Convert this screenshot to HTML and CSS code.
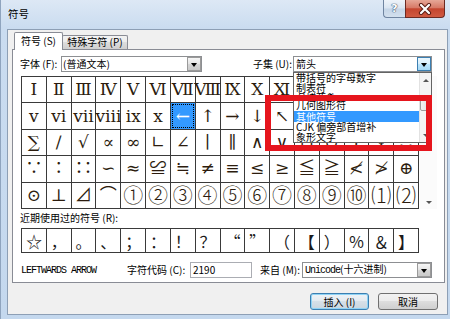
FILE: index.html
```html
<!DOCTYPE html>
<html>
<head>
<meta charset="utf-8">
<title>符号</title>
<link rel="stylesheet" href="styles.css">
</head>
<body>
<div class="window">
  <div class="titlebar">
    <span class="title">符号</span>
    <div class="caption">
      <div class="cbtn help">?</div>
      <div class="cbtn close">
        <svg width="16" height="12" viewBox="0 0 16 12"><path d="M4 2 L12 10 M12 2 L4 10" stroke="#5b1d14" stroke-width="4.2" stroke-linecap="round" fill="none"/><path d="M4 2 L12 10 M12 2 L4 10" stroke="#fff" stroke-width="2.2" stroke-linecap="round" fill="none"/></svg>
      </div>
    </div>
  </div>
  <div class="client">
    <div class="tabs">
      <div class="tab active">符号 (<u>S</u>)</div>
      <div class="tab">特殊字符 (<u>P</u>)</div>
    </div>
    <div class="panel">
      <div class="fontrow">
        <span class="lbl font-lbl">字体 (<u>F</u>):</span>
        <div class="combo font-combo"><span class="ctext">(普通文本)</span><i class="dd"></i></div>
        <span class="lbl subset-lbl">子集 (<u>U</u>):</span>
        <div class="combo subset-combo"><span class="ctext">箭头</span><i class="dd hot"></i>
          <div class="droplist">
            <div class="items">
              <div class="item">带括号的字母数字</div>
              <div class="item">制表符</div>
              <div class="item partial"><span>方块元素</span></div>
              <div class="item tall">几何图形符</div>
              <div class="item sel">其他符号</div>
              <div class="item">CJK 偏旁部首增补</div>
              <div class="item">象形文字</div>
            </div>
            <div class="lscroll">
              <span class="sarrow up"></span>
              <span class="thumb"></span>
              <span class="sarrow down"></span>
            </div>
          </div>
        </div>
      </div>
      <div class="gridwrap">
        <div class="grid main">
          <span>Ⅰ</span><span>Ⅱ</span><span>Ⅲ</span><span>Ⅳ</span><span>Ⅴ</span><span>Ⅵ</span><span>Ⅶ</span><span>Ⅷ</span><span>Ⅸ</span><span>Ⅹ</span><span>Ⅺ</span><span>Ⅻ</span><span>ⅰ</span><span>ⅱ</span><span>ⅲ</span><span>ⅳ</span>
          <span>ⅴ</span><span>ⅵ</span><span>ⅶ</span><span>ⅷ</span><span>ⅸ</span><span>ⅹ</span><span class="selected">←</span><span>↑</span><span>→</span><span>↓</span><span>↖</span><span>↗</span><span>↘</span><span>↙</span><span>∈</span><span>∏</span>
          <span>∑</span><span>∕</span><span>√</span><span>∝</span><span>∞</span><span>∟</span><span>∠</span><span>∣</span><span>∥</span><span>∧</span><span>∨</span><span>∩</span><span>∪</span><span>∫</span><span>∮</span><span>∴</span>
          <span>∵</span><span>∶</span><span>∷</span><span>∽</span><span>≈</span><span>≌</span><span>≒</span><span>≠</span><span>≡</span><span>≤</span><span>≥</span><span>≦</span><span>≧</span><span>≮</span><span>≯</span><span>⊕</span>
          <span>⊙</span><span>⊥</span><span>⊿</span><span>⌒</span><span class="big">①</span><span class="big">②</span><span class="big">③</span><span class="big">④</span><span class="big">⑤</span><span class="big">⑥</span><span class="big">⑦</span><span class="big">⑧</span><span class="big">⑨</span><span class="big">⑩</span><span class="big">⑴</span><span class="big">⑵</span>
        </div>
        <div class="vscroll"><span class="sarrow down"></span></div>
      </div>
      <div class="recent-label">近期使用过的符号 (<u>R</u>):</div>
      <div class="grid recent">
        <span>☆</span><span>，</span><span>。</span><span>、</span><span>；</span><span>：</span><span>！</span><span>？</span><span>“</span><span>”</span><span>（</span><span>【</span><span>）</span><span>％</span><span>＆</span><span>】</span>
      </div>
      <div class="inforow">
        <span class="charname">LEFTWARDS ARROW</span>
        <span class="lbl code-lbl">字符代码 (<u>C</u>):</span>
        <div class="input">2190</div>
        <span class="lbl from-lbl">来自 (<u>M</u>):</span>
        <div class="combo from-combo"><span class="ctext"><span class="mono">Unicode</span>(十六进制)</span><i class="dd"></i></div>
      </div>
    </div>
    <div class="buttons">
      <div class="btn default">插入 (<u>I</u>)</div>
      <div class="btn">取消</div>
    </div>
  </div>
  <div class="annot"></div>
</div>
</body>
</html>
```
FILE: styles.css
```css
* { box-sizing: border-box; margin: 0; padding: 0; }
html, body { width: 450px; height: 319px; overflow: hidden; }
body {
  background: #c6d9ee;
  font-family: "Noto Sans CJK SC", sans-serif;
  font-size: 10px;
  color: #000;
}
u { text-decoration: none; }

.window {
  position: relative;
  width: 450px;
  height: 319px;
  display: flex;
  flex-direction: column;
  background: linear-gradient(#dde8f5 0, #cadcf0 28px, #c4d8ee 100%);
  border-left: 1px solid #8fa4be;
}

.titlebar {
  height: 29px;
  flex: none;
  display: flex;
  align-items: flex-start;
}
.title {
  margin: 8px 0 0 7px;
  line-height: 12px;
  font-size: 10.5px;
}
.caption {
  margin-left: auto;
  margin-right: 5px;
  display: flex;
}
.cbtn {
  height: 18px;
  display: flex;
  align-items: center;
  justify-content: center;
}
.help {
  width: 22px;
  border: 1px solid #6f84a0;
  border-top: none;
  border-right: none;
  border-radius: 0 0 0 4px;
  background: linear-gradient(#eef3f9, #dae5f1 48%, #c5d5e7 52%, #d3e0ee);
  font-family: "DejaVu Sans", sans-serif;
  font-size: 11px;
  font-weight: bold;
  color: #fff;
  text-shadow: 0 0 1px #3e5270, 0 0 1px #3e5270, 0 0 1px #3e5270;
}
.close {
  width: 40px;
  border: 1px solid #6c2a22;
  border-top: none;
  border-radius: 0 0 4px 0;
  background: linear-gradient(#e6a797, #d77a67 45%, #c4452f 52%, #d05a41);
}

.client {
  flex: 1;
  margin: 0 2px 4px 6px;
  border: 1px solid #8d9fb5;
  background: #f0f0f0;
  padding-top: 2px;
  display: flex;
  flex-direction: column;
}

.tabs {
  display: flex;
  align-items: flex-end;
  height: 17px;
  margin-left: 6px;
  position: relative;
  z-index: 1;
}
.tab {
  height: 14px;
  width: 66px;
  margin-left: -1px;
  border: 1px solid #898c95;
  border-bottom: none;
  background: linear-gradient(#f3f3f3, #ebebeb 50%, #dddddd 50%, #cfcfcf);
  text-align: center;
  line-height: 12px;
  border-radius: 2px 2px 0 0;
}
.tab.active {
  width: 49px;
  margin-left: 0;
  height: 18px;
  margin-bottom: -1px;
  background: #fff;
  line-height: 16px;
  position: relative;
  z-index: 2;
}

.panel {
  margin: 0 2px 0 4px;
  border: 1px solid #898c95;
  background: #fff;
  padding: 6px 0 4px 8px;
  display: flex;
  flex-direction: column;
}

.fontrow {
  display: flex;
  align-items: center;
  height: 16px;
  padding-right: 12px;
}
.lbl { white-space: nowrap; line-height: 14px; }
.font-lbl { width: 41px; margin-left: -1px; }
.subset-lbl { margin-left: auto; margin-right: 1px; }

.combo {
  position: relative;
  height: 16px;
  border: 1px solid #8d8f92;
  background: #fff;
  display: flex;
  align-items: center;
}
.ctext { padding-left: 1px; line-height: 14px; white-space: nowrap; }
.font-combo { width: 141px; }
.subset-combo { width: 139px; }
.subset-combo .ctext { padding-left: 2px; }
.dd {
  margin-left: auto;
  width: 14px;
  height: 14px;
  border: 1px solid #9a9a9a;
  background: linear-gradient(#f6f6f6, #e4e4e4 50%, #d6d6d6 50%, #cacaca);
  display: flex;
  align-items: center;
  justify-content: center;
}
.dd::after {
  content: "";
  border-left: 3.5px solid transparent;
  border-right: 3.5px solid transparent;
  border-top: 4px solid #000;
  margin-top: 1px;
}
.dd.hot {
  border-color: #3c7fb1;
  background: linear-gradient(#eaf6fd, #d9f0fc 50%, #bee6fd 50%, #a7d9f5);
}

.droplist {
  position: absolute;
  top: 15px;
  left: -1px;
  width: 139px;
  height: 71px;
  border: 1px solid #646464;
  background: #fff;
  display: flex;
  z-index: 5;
}
.items { flex: 1; display: flex; flex-direction: column; }
.item {
  height: 10px;
  line-height: 10px;
  padding-left: 2px;
  white-space: nowrap;
}
.item.partial { height: 6px; overflow: hidden; }
.item.partial span { display: block; margin-top: -5px; line-height: 12px; }
.item.tall { height: 14px; line-height: 16px; }
.item.sel { background: #3399ff; color: #fff; height: 11px; line-height: 11px; }
.lscroll {
  width: 12px;
  background: #f4f4f4;
  border-left: 1px solid #e2e2e2;
  display: flex;
  flex-direction: column;
  align-items: center;
}
.lscroll .up { margin-top: 6px; }
.lscroll .thumb {
  margin-top: 17px;
  width: 11px;
  height: 12px;
  border: 1px solid #9c9c9c;
  border-radius: 2px;
  background: linear-gradient(90deg, #f2f2f2, #dcdcdc);
}
.lscroll .down { margin-top: auto; margin-bottom: 5px; }

.sarrow {
  width: 0;
  height: 0;
  border-left: 3px solid transparent;
  border-right: 3px solid transparent;
}
.sarrow.up { border-bottom: 3px solid #555; }
.sarrow.down { border-top: 3px solid #555; }

.gridwrap {
  margin-top: 4px;
  display: flex;
  height: 133px;
}
.grid {
  width: 398px;
  display: grid;
  grid-template-columns: repeat(16, 1fr);
  gap: 1px;
  padding: 1px;
  background: #3a3a3a;
}
.grid span {
  background: #fff;
  display: flex;
  align-items: center;
  justify-content: center;
  line-height: 1;
  min-width: 0;
  min-height: 0;
}
.main {
  grid-template-rows: repeat(5, 1fr);
  font-family: "DejaVu Serif", "Noto Sans CJK SC", serif;
  font-size: 17px;
  color: #2c1c0e;
}
.main .big {
  font-family: "Noto Sans CJK SC", sans-serif;
  font-size: 20px;
  font-weight: 300;
}
.main .selected {
  background: #3399ff;
  color: #fff;
  outline: 1px dotted #000;
  outline-offset: -2px;
}
.vscroll {
  width: 17px;
  margin-left: 1px;
  background: #fbfbfb;
  display: flex;
  flex-direction: column;
  align-items: center;
}
.vscroll .down { margin-top: auto; margin-bottom: 5px; }

.recent-label {
  margin-top: 2px;
  line-height: 14px;
  margin-left: -1px;
}
.recent {
  margin-top: 3px;
  height: 25px;
  grid-template-rows: 1fr;
  font-family: "Noto Sans CJK SC", sans-serif;
  font-size: 16px;
  color: #1a1a1a;
}

.inforow {
  margin-top: 9px;
  height: 16px;
  display: flex;
  align-items: center;
  padding-right: 12px;
}
.charname {
  width: 106px;
  font-family: "Liberation Mono", monospace;
  font-size: 10px;
  letter-spacing: -1px;
  white-space: nowrap;
}
.code-lbl { width: 63px; }
.input {
  width: 62px;
  height: 16px;
  border: 1px solid #abadb3;
  background: #fff;
  padding-left: 2px;
  line-height: 14px;
}
.from-lbl { margin-left: 8px; width: 42px; }
.from-combo { width: 130px; margin-left: auto; }
.from-combo .ctext { padding-left: 2px; }
.mono {
  font-family: "Liberation Mono", monospace;
  letter-spacing: -1px;
}

.buttons {
  margin-top: 10px;
  display: flex;
  justify-content: flex-end;
  gap: 9px;
  padding-right: 9px;
}
.btn {
  width: 60px;
  height: 17px;
  border: 1px solid #707070;
  border-radius: 3px;
  background: linear-gradient(#f2f2f2, #ebebeb 50%, #dddddd 50%, #cfcfcf);
  text-align: center;
  line-height: 15px;
}
.btn.default {
  width: 59px;
  border-color: #3c7fb1;
  box-shadow: inset 0 0 0 1px #8fd3f5;
  background: linear-gradient(#eef3f7, #e3eaf0 50%, #d6e0e8 50%, #cbd6df);
}

.annot {
  position: absolute;
  left: 264px;
  top: 95px;
  width: 167px;
  height: 56px;
  border: 6px solid #e6151d;
  z-index: 10;
  pointer-events: none;
}
```
